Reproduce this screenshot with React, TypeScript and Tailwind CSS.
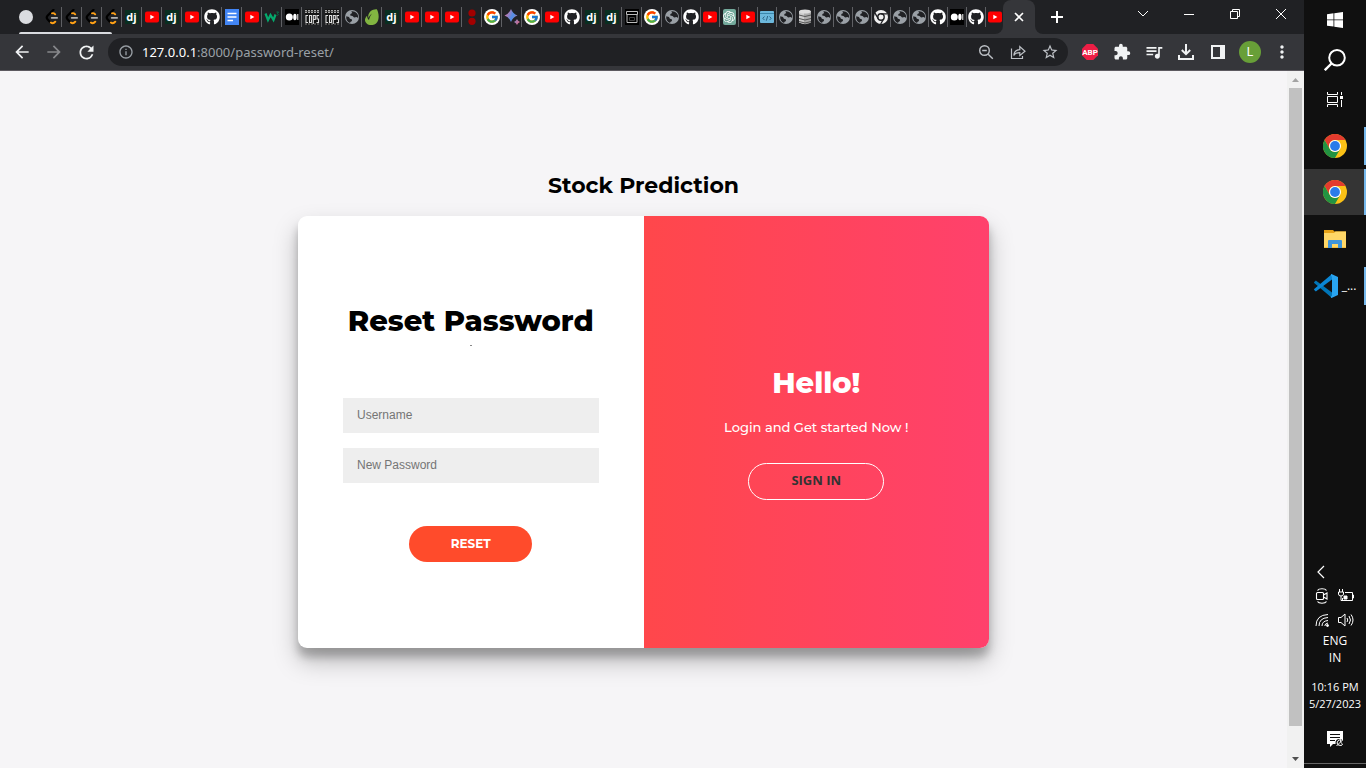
import React from "react";
import { FaGithub } from "react-icons/fa";
import { FcGoogle } from "react-icons/fc";
import { SiOpenai } from "react-icons/si";
import {
  MdArrowBack,
  MdArrowForward,
  MdExtension,
  MdInfoOutline,
  MdMoreVert,
  MdQueueMusic,
  MdRefresh,
  MdStarBorder,
} from "react-icons/md";

type Site =
  | "leet" | "django" | "youtube" | "github" | "docs" | "w3" | "medium" | "cops" | "globe"
  | "envato" | "dots" | "google" | "spark" | "archive" | "gpt" | "code" | "db" | "chrome";

const wideTabs: Site[] = [
  "leet", "leet", "leet", "leet", "django", "youtube", "django", "youtube", "github", "docs",
  "youtube", "w3", "medium", "cops", "cops", "globe", "envato", "django", "youtube", "youtube",
  "youtube", "dots", "google", "spark", "google", "youtube", "github", "django", "django",
  "archive", "google", "globe",
];

const narrowTabs: Site[] = [
  "github", "youtube", "gpt", "youtube", "code", "globe", "db", "globe", "globe", "globe",
  "chrome", "globe", "globe", "github", "medium", "github", "youtube",
];

function Favicon({ site }: { site: Site }) {
  if (site === "youtube")
    return (
      <svg width="16" height="16" viewBox="0 0 16 16">
        <rect x="1" y="2.5" width="14" height="11" rx="2" fill="#f00" />
        <path d="M6.3 5.8v4.4L10.4 8z" fill="#fff" />
      </svg>
    );
  if (site === "github") return <FaGithub size={16} color="#fff" />;
  if (site === "google")
    return (
      <span className="flex size-4 items-center justify-center rounded-full bg-white">
        <FcGoogle size={14} />
      </span>
    );
  if (site === "django")
    return (
      <span className="flex size-[14px] items-center justify-center bg-[#092e20] font-['Open_Sans',sans-serif] text-[11px] leading-[14px] font-bold text-white">
        dj
      </span>
    );
  if (site === "gpt")
    return (
      <span className="flex h-4 w-[13px] items-center justify-center rounded-xs bg-[#74aa9c]">
        <SiOpenai size={12} color="#fff" />
      </span>
    );
  return (
    <svg width="16" height="16" viewBox="0 0 16 16" fill="none">
      {site === "leet" && (
        <>
          <path d="M9.500.8 3.500 6.800Q2 8.500 3.500 10.300L6 12.900" stroke="#000" strokeWidth="2.200" strokeLinecap="round" />
          <path d="M8 4.300q1.700-.6 3.200 1M6.800 13.500q2.400 1.800 4.500-.8" stroke="#ffa116" strokeWidth="1.900" strokeLinecap="round" />
          <path d="M7.600 8.900h5.600" stroke="#b3b3b3" strokeWidth="1.600" strokeLinecap="round" />
        </>
      )}
      {site === "docs" && (
        <>
          <path d="M1 0h14v16H1z" fill="#4285f4" />
          <path d="M3.500 4.500h9M3.500 8h9M3.500 11.500h5.500" stroke="#fff" strokeWidth="1.600" />
        </>
      )}
      {site === "w3" && (
        <>
          <path d="M1.500 4.500 4 11l2.500-5 3 5 2-5.500" stroke="#04aa6d" strokeWidth="2.200" />
          <path d="M12.500 3h2l-1 1.500q1.500.5 0 2" stroke="#04754d" />
        </>
      )}
      {site === "medium" && (
        <>
          <path d="M1 0h14v16H1z" fill="#000" />
          <circle cx="5.300" cy="8" r="3.500" fill="#fff" />
          <ellipse cx="10.900" cy="8" rx="1.700" ry="3.300" fill="#fff" />
          <path d="M13.800 5v6" stroke="#fff" />
        </>
      )}
      {site === "cops" && (
        <>
          <path d="M1 0h14v16H1z" fill="#151515" />
          <path d="M1 2.500h14" stroke="#aaa" strokeWidth="3" strokeDasharray="2 1" />
          <path d="M1 2.500h14" stroke="#444" strokeWidth=".8" />
          <path d="M4 6.500H2v7h2M5.500 6.500h2v7h-2zM9.300 15V6.500h2v4h-2M15 6.500h-2v3.500h1.500v3.500h-2" stroke="#ddd" strokeWidth="1.100" />
          <path d="M1 15h14" stroke="#888" strokeDasharray="2 1" />
        </>
      )}
      {site === "globe" && (
        <>
          <circle cx="8" cy="8" r="7" fill="#9aa0a6" />
          <path d="M2.200 7.200 5 8.100l.9 1.700 1.900.4.200 1.700-1.700 1.200-.2 1C3.300 13.100 1.800 10.400 2.200 7.200zM7.300 2.400l1 1.700-1.900.9-.2 1.600 2.300.3 1.600 1.500 2.500-.4 1.600 1.100c.6-4.100-2.900-7.300-6.900-6.700z" fill="#202124" />
        </>
      )}
      {site === "envato" && (
        <path d="M12.800.2C8.500-.2 4.800 2.800 4.300 6.500q-.1 1.300.1 2.500c.9-2 2.100-3.500 3.500-4.600C6.300 6.600 5.400 8.800 5 11 3.800 10 3.100 8.600 3.100 6.800-.2 10 .7 13.600 3.500 15.200c4.300 2.300 9.300.2 10.700-4.300 1-3.500.3-7.800-1.400-10.700z" fill="#82b541" />
      )}
      {site === "dots" && (
        <>
          <circle cx="8" cy="4" r="3.600" fill="#a30000" />
          <circle cx="8" cy="12.300" r="3.600" fill="#a30000" />
        </>
      )}
      {site === "spark" && (
        <>
          <defs>
            <linearGradient id="sparkle" x1="0" x2="16" y1="4" y2="12" gradientUnits="userSpaceOnUse">
              <stop stopColor="#e8709a" />
              <stop offset=".5" stopColor="#4f8fe8" />
              <stop offset="1" stopColor="#d56b8c" />
            </linearGradient>
          </defs>
          <path d="M7 0q1.800 4.700 6.500 6.500Q8.800 8.300 7 13 5.200 8.300.5 6.500 5.200 4.700 7 0zM13 10q.8 2.200 3 3-2.200.8-3 3-.8-2.200-3-3 2.200-.8 3-3z" fill="url(#sparkle)" />
        </>
      )}
      {site === "archive" && (
        <>
          <path d="M1 0h14v16H1z" fill="#000" />
          <path d="M2.500 2.500h11v3h-11zM3 5.500v8h10v-8" stroke="#bbb" />
          <path d="M5.500 8.500h5v3h-5z" stroke="#444" />
        </>
      )}
      {site === "code" && (
        <>
          <rect x="1" y="2" width="14" height="12" rx="1" fill="#6cb8dc" />
          <path d="M1 4.500h14" stroke="#3b87ac" />
          <path d="M5.500 7.500 3.800 9.300l1.700 1.800M10.500 7.500l1.700 1.800-1.700 1.800M8.700 7l-1.400 4.700" stroke="#2a6485" />
        </>
      )}
      {site === "db" && (
        <>
          <path d="M2 2.500h12v11q-6 3.500-12 0z" fill="#aaa" />
          <path d="M2 2.500h5v12.500l-5-1.500z" fill="#ccc" />
          <ellipse cx="8" cy="2.500" rx="6" ry="2" fill="#ddd" />
          <path d="M2 6q6 3 12 0M2 9.500q6 3 12 0M2 12.500q6 3 12 0" stroke="#555" />
        </>
      )}
      {site === "chrome" && (
        <>
          <circle cx="8" cy="8" r="7" fill="#f1f1f1" />
          <circle cx="8" cy="8" r="3.200" stroke="#202124" strokeWidth="1.400" />
          <path d="M8 4.800h6.300M5.200 9.600 2 4.200M10.800 9.600 7.700 15" stroke="#202124" strokeWidth="1.300" />
        </>
      )}
    </svg>
  );
}

function TabStrip() {
  return (
    <div className="flex h-[34px] shrink-0 bg-[#35363a] text-white">
      <div className="relative flex shrink-0 items-center rounded-br-lg bg-[#202124] pl-[19px]">
        <span className="mr-[9px] size-[14px] rounded-full bg-[#dadce0]" />
        {wideTabs.map((site, i) => (
          <button key={i} aria-label={site} className="flex h-5 w-5 items-center justify-center border-r border-[#5f6064]">
            <Favicon site={site} />
          </button>
        ))}
        {narrowTabs.map((site, i) => (
          <button key={i} aria-label={site} className="flex h-5 w-[19px] items-center justify-center border-r border-[#5f6064] last-of-type:w-[17px] last-of-type:border-r-0">
            <Favicon site={site} />
          </button>
        ))}
        <span className="absolute bottom-0 left-[19px] h-[2px] w-[93px] rounded-t bg-[#dadce0]" />
      </div>
      <div className="bg-[#202124]">
        <div className="flex h-[34px] w-8 items-center justify-center rounded-t-lg bg-[#35363a]">
          <button aria-label="Close tab">
            <svg width="10" height="10" viewBox="0 0 10 10" stroke="#fff" strokeWidth="1.600">
              <path d="m1 1 8 8M9 1 1 9" />
            </svg>
          </button>
        </div>
      </div>
      <div className="flex flex-1 rounded-bl-lg bg-[#202124]">
        <button aria-label="New tab" className="flex h-[34px] w-11 items-center justify-center">
          <svg width="12" height="12" viewBox="0 0 12 12" stroke="#fff" strokeWidth="2">
            <path d="M6 0v12M0 6h12" />
          </svg>
        </button>
        <div className="ml-auto flex h-7">
          <WindowButton label="Search tabs" d="m1 3 5 5 5-5" />
          <WindowButton label="Minimize" d="M1 6.500h10" />
          <WindowButton label="Restore" d="M1.500 3.500h7v7h-7zM3.500 3.500v-2h7v7h-2" />
          <WindowButton label="Close" d="m1 1 10 10M11 1 1 11" />
        </div>
      </div>
    </div>
  );
}

function WindowButton({ label, d }: { label: string; d: string }) {
  return (
    <button aria-label={label} className="flex w-[46px] items-center justify-center">
      <svg width="12" height="12" viewBox="0 0 12 12" fill="none" stroke="#fff">
        <path d={d} />
      </svg>
    </button>
  );
}

function ToolButton({ label, children }: { label: string; children: React.ReactNode }) {
  return (
    <button aria-label={label} className="flex h-7 w-8 shrink-0 items-center justify-center">
      {children}
    </button>
  );
}

function Toolbar() {
  return (
    <div className="flex h-[37px] shrink-0 items-center border-b border-[#5d5a60] bg-[#35363a] px-[6px] text-[#f1f3f4]">
      <ToolButton label="Back"><MdArrowBack size={20} /></ToolButton>
      <ToolButton label="Forward"><MdArrowForward size={20} color="#87888b" /></ToolButton>
      <ToolButton label="Reload"><MdRefresh size={21} /></ToolButton>
      <div className="mx-[6px] flex h-7 min-w-0 flex-1 items-center rounded-full bg-[#202124] pr-[2px] pl-[10px] text-[#bdc1c6]">
        <MdInfoOutline size={16} color="#9aa0a6" />
        <div className="ml-2 flex-1 font-['Noto_Sans','Open_Sans',sans-serif] text-[13px] leading-5 text-[#9aa0a6]">
          <span className="text-white">127.0.0.1</span>:8000/password-reset/
        </div>
        <ToolButton label="Zoom">
          <svg width="16" height="16" viewBox="0 0 16 16" fill="none" stroke="currentColor" strokeWidth="1.400">
            <circle cx="6.500" cy="6.500" r="4.800" />
            <path d="m10.200 10.200 4.600 4.600M4.200 6.500h4.600" />
          </svg>
        </ToolButton>
        <ToolButton label="Share">
          <svg width="16" height="16" viewBox="0 0 16 16" fill="none" stroke="currentColor" strokeWidth="1.200">
            <path d="M1.500 4.500v10h11V12M3.800 11.500q.5-5.500 6-5.800V2.500L15 7.300l-5.200 4.200V8.600q-4-.1-6 2.900z" />
          </svg>
        </ToolButton>
        <ToolButton label="Bookmark"><MdStarBorder size={18} /></ToolButton>
      </div>
      <ToolButton label="Adblock Plus">
        <svg width="16" height="16" viewBox="0 0 16 16">
          <path d="M4.700 0h6.600L16 4.700v6.600L11.300 16H4.700L0 11.300V4.700z" fill="#ed1e45" />
          <text x="8" y="11" textAnchor="middle" fill="#fff" fontSize="8" fontWeight="700" fontFamily="Roboto, sans-serif">ABP</text>
        </svg>
      </ToolButton>
      <ToolButton label="Extensions"><MdExtension size={18} /></ToolButton>
      <ToolButton label="Media"><MdQueueMusic size={20} /></ToolButton>
      <ToolButton label="Downloads">
        <svg width="16" height="16" viewBox="0 0 16 16" fill="none" stroke="currentColor" strokeWidth="2">
          <path d="M8 0v10M3.800 6 8 10.200 12.200 6M1 11v4h14v-4" />
        </svg>
      </ToolButton>
      <ToolButton label="Side panel">
        <svg width="14" height="14" viewBox="0 0 14 14">
          <path fillRule="evenodd" d="M0 0h14v14H0zM2 2v10h7V2z" fill="currentColor" />
        </svg>
      </ToolButton>
      <ToolButton label="Profile">
        <span className="flex size-[22px] items-center justify-center rounded-full bg-[#689f38] font-['Roboto',sans-serif] text-xs text-white">L</span>
      </ToolButton>
      <ToolButton label="Menu"><MdMoreVert size={20} /></ToolButton>
    </div>
  );
}

function Field({ label, type }: { label: string; type: string }) {
  return (
    <input
      type={type}
      aria-label={label}
      placeholder={label}
      className="h-[35px] w-full bg-[#eee] px-[14px] pb-[2px] font-['Liberation_Sans',Arial,sans-serif] text-xs text-black outline-none placeholder:text-[#757575]"
    />
  );
}

function ResetPage() {
  return (
    <main className="flex min-w-0 flex-1 flex-col items-center justify-center bg-[#f6f5f7] pb-[19px] font-['Montserrat','Inter',sans-serif] text-black">
      <h2 className="text-[22px] leading-7 font-bold">Stock Prediction</h2>
      <div className="mt-4 grid min-h-[432px] w-full max-w-[691px] grid-cols-2 overflow-hidden rounded-[9px] bg-white shadow-[0_13px_25px_rgba(0,0,0,0.25),0_9px_9px_rgba(0,0,0,0.22)]">
        <form className="flex flex-col items-center justify-center px-[45px]" onSubmit={(e) => e.preventDefault()}>
          <h1 className="text-[29px] leading-[38px] font-extrabold whitespace-nowrap">Reset Password</h1>
          <hr className="mt-[5px] mb-[52px] h-px w-[2px] border-0 bg-[#888]" />
          <div className="flex w-full flex-col gap-[15px]">
            <Field label="Username" type="text" />
            <Field label="New Password" type="password" />
          </div>
          <button type="submit" className="mt-[43px] h-9 w-[123px] rounded-full bg-[#ff4b2b] text-xs font-bold text-white">
            RESET
          </button>
        </form>
        <section className="flex flex-col items-center justify-center bg-[linear-gradient(to_right,#ff474b,#ff416c)] text-white">
          <h1 className="text-[29px] leading-[38px] font-extrabold">Hello!</h1>
          <p className="mt-[15px] text-[13px] leading-5 font-medium">Login and Get started Now !</p>
          <button className="mt-[26px] h-[37px] w-[136px] rounded-full border border-white pb-[2px] font-['Open_Sans',sans-serif] text-[13px] font-bold text-[#333]">
            SIGN IN
          </button>
        </section>
      </div>
    </main>
  );
}

function Scrollbar() {
  return (
    <div className="flex w-[17px] shrink-0 flex-col items-center bg-[#f1f1f1]">
      <div className="flex h-[17px] items-center">
        <svg width="7" height="4" viewBox="0 0 7 4"><path d="M0 4 3.500 0 7 4z" fill="#a3a3a3" /></svg>
      </div>
      <div className="w-[13px] flex-1 bg-[#c1c1c1]" />
      <div className="mt-6 flex h-[18px] items-center">
        <svg width="7" height="4" viewBox="0 0 7 4"><path d="M0 0h7L3.500 4z" fill="#505050" /></svg>
      </div>
    </div>
  );
}

function ChromeLogo() {
  return (
    <svg width="24" height="24" viewBox="0 0 24 24">
      <circle cx="12" cy="12" r="12" fill="#fbc116" />
      <path d="M1.600 6A12 12 0 0 1 22.400 6H12a6 6 0 0 0-5.200 9z" fill="#e33b2e" />
      <path d="M1.600 6A12 12 0 0 0 12 24l5.200-9A6 6 0 0 1 6.800 15z" fill="#229342" />
      <circle cx="12" cy="12" r="6" fill="#fff" />
      <circle cx="12" cy="12" r="4.900" fill="#2a7bea" />
    </svg>
  );
}

function TaskButton({ label, open, children }: { label: string; open?: boolean; children: React.ReactNode }) {
  return (
    <button aria-label={label} className="relative flex h-[47px] w-full items-center justify-center">
      {children}
      {open && <span className="absolute top-[5px] right-0 h-[38px] w-[2px] bg-[#76b9ed]" />}
    </button>
  );
}

function Taskbar() {
  return (
    <aside className="flex w-[62px] shrink-0 flex-col items-center bg-[#101010] font-['Open_Sans',sans-serif] text-white">
      <button aria-label="Start" className="flex h-10 w-full items-center justify-center">
        <svg width="16" height="16" viewBox="0 0 16 16" fill="#fff">
          <path d="M0 2.200 6.500 1.300v6.200H0zM7.300 1.200 16 0v7.500H7.300zM0 8.300h6.500v6.300L0 13.700zM7.300 8.300H16V16l-8.700-1.200z" />
        </svg>
      </button>
      <button aria-label="Search" className="flex h-10 w-full items-center justify-center">
        <svg width="22" height="22" viewBox="0 0 22 22" fill="none" stroke="#fff" strokeWidth="2">
          <circle cx="13" cy="8.800" r="7.800" />
          <path d="M7.500 14.500 .8 21.200" strokeWidth="2.400" />
        </svg>
      </button>
      <button aria-label="Task view" className="flex h-10 w-full items-center justify-center">
        <svg width="16" height="16" viewBox="0 0 16 16" fill="none" stroke="#fff">
          <path d="M.5 0v2.500h10V0M.5 4.500h10v6H.5zM.5 15v-2.500h10V15M14.500 0v3M14.500 8v7" />
          <path d="M13 4h3v3h-3z" fill="#fff" stroke="none" />
        </svg>
      </button>
      <div className="mt-[3px] flex w-full flex-col">
        <button aria-label="Chrome" className="relative flex h-[46px] w-full items-center justify-center">
          <ChromeLogo />
          <span className="absolute top-1 right-0 h-[38px] w-[2px] bg-[#76b9ed]" />
        </button>
        <button aria-label="Chrome, active" className="flex h-[46px] w-full items-center justify-center border-r-2 border-[#76b9ed] bg-[#343434] pl-[2px]">
          <ChromeLogo />
        </button>
        <TaskButton label="File Explorer">
          <svg width="22" height="18" viewBox="0 0 22 18">
            <path d="M0 0h9l1.500 1.500H22V18H0z" fill="#e8a317" />
            <path d="M0 3h10l1.500-1.500H22V17.500H0z" fill="#ffd767" />
            <path d="M4 18v-7q0-1 1-1h12q1 0 1 1v7h-4v-4H8v4z" fill="#3f95dc" />
          </svg>
        </TaskButton>
        <TaskButton label="Visual Studio Code" open>
          <svg width="24" height="24" viewBox="0 0 24 24">
            <path d="M0 8.200 1.800 6.600 18 18.500V24L.2 8.900z" fill="#0075b7" />
            <path d="M0 15.800 1.800 17.400 18 5.500V0L.2 15.100z" fill="#0a86d4" />
            <path d="m17.500 0 6.500 3v18l-6.500 3q-1-.4-.5-1.500l1-1V3l-1-1.500Q16.500.4 17.500 0z" fill="#29a4f0" />
          </svg>
          <span className="ml-1 text-xs leading-5">_...</span>
        </TaskButton>
      </div>
      <div className="mt-auto flex w-full flex-col items-center">
        <button aria-label="Show hidden icons" className="mr-[28px] flex h-6 w-6 items-center justify-center">
          <svg width="8" height="14" viewBox="0 0 8 14" fill="none" stroke="#fff" strokeWidth="1.200"><path d="M7 1 1 7l6 6" /></svg>
        </button>
        <div className="grid grid-cols-2 gap-x-2 pr-[2px]">
          <span className="flex h-6 items-center justify-center">
            <svg width="16" height="16" viewBox="0 0 16 16" fill="none" stroke="#fff" strokeWidth="1.100">
              <path d="M3.500 2.500Q4.500.8 8 .8t4.500 1.700M3.500 13.500q1 1.700 4.500 1.700t4.500-1.700" />
              <rect x="2.500" y="4.500" width="7" height="7" rx="1" />
              <path d="M9.500 7 13 5v6l-3.500-2" />
            </svg>
          </span>
          <span className="flex h-6 items-center justify-center">
            <svg width="16" height="16" viewBox="0 0 16 16" fill="none" stroke="#fff">
              <path d="M7 4.500h7.500v8h-10V10M14.500 7h1v3h-1M1.500 1v3M4.500 1v3M.5 4h5v2q0 2-2.500 2T.5 6zM3 8v4.500h2" />
              <path d="M6 8h3v3H6z" fill="#fff" />
            </svg>
          </span>
          <span className="flex h-6 items-center justify-center">
            <svg width="14" height="14" viewBox="0 0 14 14" fill="none" stroke="#fff">
              <path d="M1 13Q1 2 13 1.500M4 13q0-8 9-8.500M7 13q0-5 6-5.500M9.800 13q0-2.500 3.200-3" />
              <circle cx="12.500" cy="12.500" r="1" fill="#fff" />
            </svg>
          </span>
          <span className="flex h-6 items-center justify-center">
            <svg width="16" height="16" viewBox="0 0 16 16" fill="none" stroke="#fff">
              <path d="M.5 5.500H3l4-3.500v12l-4-3.500H.5zM9 6q1.500 2 0 4M11 4q3 4 0 8M13 2.500q4 5.500 0 11" />
            </svg>
          </span>
        </div>
        <div className="text-center text-xs leading-[17px]">ENG<br />IN</div>
        <div className="mt-3 text-center text-[11px] leading-[17px] whitespace-nowrap">10:16 PM<br />5/27/2023</div>
        <button aria-label="Notifications" className="mt-[19px] flex h-4 items-center justify-center">
          <svg width="16" height="16" viewBox="0 0 16 16" fill="none">
            <path d="M0 0h16v13H6l-3 3v-3H0z" fill="#fff" />
            <path d="M3 3.500h10M3 6.500h10M3 9.500h5" stroke="#101010" />
            <circle cx="12.500" cy="12" r="4" fill="#101010" />
            <path d="M13.500 8.500q-3 .5-3.500 3.500.5 3 4.500 2.500l1-1.500q-2.500-1-2-4.500z" stroke="#fff" />
            <path d="m9.500 15 6-6" stroke="#fff" />
          </svg>
        </button>
        <div className="mt-4 h-[5px] w-full border-t border-[#666]" />
      </div>
    </aside>
  );
}

export default function App() {
  return (
    <div className="flex h-screen overflow-hidden">
      <div className="flex min-w-0 flex-1 flex-col">
        <TabStrip />
        <Toolbar />
        <div className="flex min-h-0 flex-1">
          <ResetPage />
          <Scrollbar />
        </div>
      </div>
      <Taskbar />
    </div>
  );
}
